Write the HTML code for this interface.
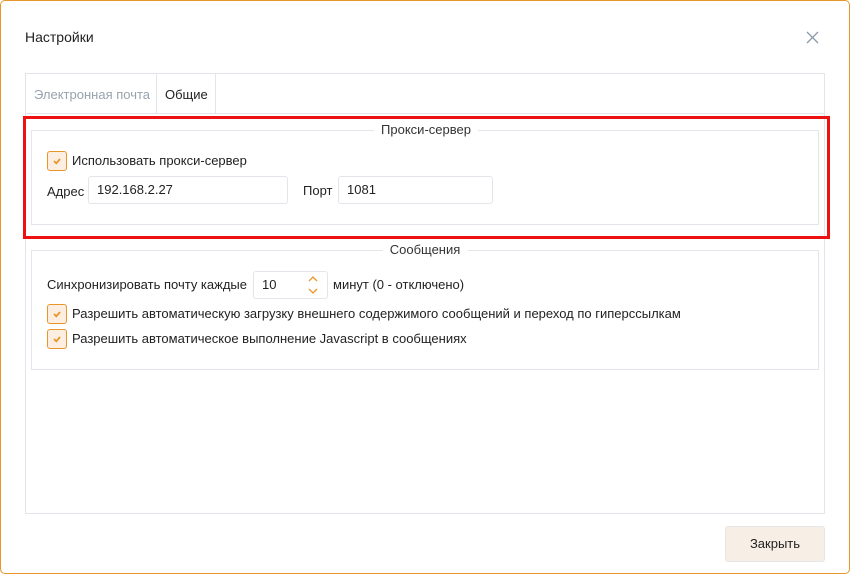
<!DOCTYPE html>
<html><head><meta charset="utf-8"><style>
*{box-sizing:border-box;margin:0;padding:0}
body{width:850px;height:574px;background:#fff;font-family:"Liberation Sans","Noto Sans CJK SC",sans-serif;font-size:13px;color:#222;position:relative;overflow:hidden}
.win{position:absolute;left:0;top:0;width:850px;height:574px;border:1px solid #e8962a;border-radius:5px}
.a{position:absolute;white-space:nowrap}
.fs{position:absolute;border:1px solid #e2e6ea}
.leg{position:absolute;background:#fff;padding:0 7px;transform:translateX(-50%);top:-9px;color:#333}
.cb{position:absolute;width:20px;height:20px;border:1px solid #e8962a;border-radius:3px;background:#fcefe2}
.cb svg{position:absolute;left:4px;top:4px}
.inp{position:absolute;border:1px solid #e2e6ea;border-radius:3px;background:#fff;padding-left:8px;line-height:25px}
</style></head><body>
<div class="win"></div>
<div class="a" style="left:25px;top:29px;font-size:14px">Настройки</div>
<svg class="a" style="left:806px;top:31px" width="13" height="13"><path d="M1 1L12 12M12 1L1 12" stroke="#8a9aaa" stroke-width="1.3"/></svg>
<div style="position:absolute;left:25px;top:73px;width:800px;height:441px;border:1px solid #e2e6ea"></div>
<div style="position:absolute;left:26px;top:113px;width:798px;height:1px;background:#e2e6ea"></div>
<div style="position:absolute;left:156px;top:74px;width:1px;height:39px;background:#e2e6ea"></div>
<div style="position:absolute;left:215px;top:74px;width:1px;height:39px;background:#e2e6ea"></div>
<div class="a" style="left:34px;top:87px;color:#98a2ac">Электронная почта</div>
<div class="a" style="left:165px;top:87px">Общие</div>
<div style="position:absolute;left:23px;top:116px;width:807px;height:123px;border:3px solid #ee1111"></div>
<div class="fs" style="left:31px;top:130px;width:788px;height:95px"><div class="leg" style="left:394px">Прокси-сервер</div></div>
<div class="cb" style="left:47px;top:151px"><svg width="10" height="10"><path d="M2 5L4.3 7.3L8 3" stroke="#e8962a" stroke-width="1.8" fill="none"/></svg></div>
<div class="a" style="left:72px;top:153px">Использовать прокси-сервер</div>
<div class="a" style="left:47px;top:184px">Адрес</div>
<div class="inp" style="left:88px;top:176px;width:200px;height:28px">192.168.2.27</div>
<div class="a" style="left:303px;top:183px">Порт</div>
<div class="inp" style="left:338px;top:176px;width:155px;height:28px">1081</div>
<div class="fs" style="left:31px;top:250px;width:788px;height:120px"><div class="leg" style="left:393px">Сообщения</div></div>
<div class="a" style="left:47px;top:277px">Синхронизировать почту каждые</div>
<div class="inp" style="left:253px;top:271px;width:75px;height:28px">10</div>
<svg class="a" style="left:307px;top:273px" width="12" height="24"><path d="M2 8L6 4L10 8M2 16L6 20L10 16" stroke="#e8962a" stroke-width="1.3" fill="none"/></svg>
<div class="a" style="left:333px;top:277px">минут (0 - отключено)</div>
<div class="cb" style="left:47px;top:304px"><svg width="10" height="10"><path d="M2 5L4.3 7.3L8 3" stroke="#e8962a" stroke-width="1.8" fill="none"/></svg></div>
<div class="a" style="left:72px;top:306px">Разрешить автоматическую загрузку внешнего содержимого сообщений и переход по гиперссылкам</div>
<div class="cb" style="left:47px;top:329px"><svg width="10" height="10"><path d="M2 5L4.3 7.3L8 3" stroke="#e8962a" stroke-width="1.8" fill="none"/></svg></div>
<div class="a" style="left:72px;top:331px">Разрешить автоматическое выполнение Javascript в сообщениях</div>
<div style="position:absolute;left:725px;top:526px;width:100px;height:36px;background:#f7efe6;border:1px solid #e6e6e6;border-radius:3px;text-align:center;line-height:34px">Закрыть</div>
</body></html>
